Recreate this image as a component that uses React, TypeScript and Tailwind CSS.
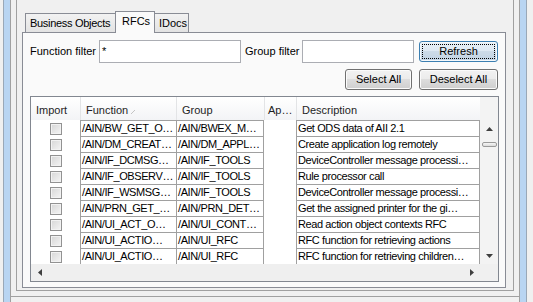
import React from "react";

const ROWS = [
  ["/AIN/BW_GET_O…", "/AIN/BWEX_M…", "Get ODS data of AII 2.1"],
  ["/AIN/DM_CREAT…", "/AIN/DM_APPL…", "Create application log remotely"],
  ["/AIN/IF_DCMSG…", "/AIN/IF_TOOLS", "DeviceController message processi…"],
  ["/AIN/IF_OBSERV…", "/AIN/IF_TOOLS", "Rule processor call"],
  ["/AIN/IF_WSMSG…", "/AIN/IF_TOOLS", "DeviceController message processi…"],
  ["/AIN/PRN_GET_…", "/AIN/PRN_DET…", "Get the assigned printer for the gi…"],
  ["/AIN/UI_ACT_O…", "/AIN/UI_CONT…", "Read action object contexts RFC"],
  ["/AIN/UI_ACTIO…", "/AIN/UI_RFC", "RFC function for retrieving actions"],
  ["/AIN/UI_ACTIO…", "/AIN/UI_RFC", "RFC function for retrieving children…"],
];

const Button = ({
  label,
  width,
  focused,
}: {
  label: string;
  width: string;
  focused?: boolean;
}) => (
  <div
    className={
      focused
        ? `${width} h-[21px] shrink-0 rounded-[3px] border border-[#3c7fb1] bg-[linear-gradient(to_bottom,#e8f0f7_0%,#dde8f2_50%,#cddbe8_50%,#c2d3e3_100%)] shadow-[inset_0_0_0_1px_#f4f8fb] p-[2px]`
        : `${width} h-[21px] shrink-0 rounded-[3px] border border-[#707070] bg-[linear-gradient(to_bottom,#f2f2f2_0%,#ebebeb_50%,#dddddd_50%,#cfcfcf_100%)] shadow-[inset_0_0_0_1px_#fbfbfb] p-[2px]`
    }
  >
    <div
      className={
        focused
          ? "h-full flex items-center justify-center border border-dotted border-black leading-none whitespace-nowrap"
          : "h-full flex items-center justify-center border border-transparent leading-none whitespace-nowrap"
      }
    >
      {label}
    </div>
  </div>
);

const Checkbox = () => (
  <div className="w-[12px] h-[12px] border border-[#929292] bg-[linear-gradient(135deg,#d6d6d6,#f4f4f4)] shadow-[inset_0_0_0_1px_#f2f2f2]" />
);

const ArrowUp = () => (
  <svg width="7" height="4" viewBox="0 0 7 4">
    <path d="M3.5 0L7 4H0z" fill="#3e3e3e" />
  </svg>
);
const ArrowDown = () => (
  <svg width="7" height="4" viewBox="0 0 7 4">
    <path d="M0 0H7L3.5 4z" fill="#3e3e3e" />
  </svg>
);
const ArrowLeft = () => (
  <svg width="4" height="7" viewBox="0 0 4 7">
    <path d="M0 3.5L4 0V7z" fill="#3e3e3e" />
  </svg>
);
const ArrowRight = () => (
  <svg width="4" height="7" viewBox="0 0 4 7">
    <path d="M4 3.5L0 0V7z" fill="#3e3e3e" />
  </svg>
);

const RfcTable = () => (
  <div className="w-[469px] h-[186px] shrink-0 border border-[#828790] bg-white flex flex-col">
    {/* header */}
    <div className="flex h-[23px]">
      <div className="w-[449px] flex bg-[linear-gradient(to_bottom,#ffffff,#f3f4f6)] text-[#1e1e1e]">
        <div className="w-[49px] pl-[5px] pt-[3px] flex items-center">Import</div>
        <div className="w-[96px] pl-[5px] pt-[3px] flex items-center border-l border-[#e3e4e6]">
          Function
          <svg width="4" height="4" viewBox="0 0 4 4" className="ml-[3px] mt-[3px]">
            <path d="M0 4L4 0" stroke="#c4c4c4" strokeWidth="1" />
          </svg>
        </div>
        <div className="w-[88px] pl-[5px] pt-[3px] flex items-center border-l border-[#e3e4e6]">Group</div>
        <div className="w-[32px] pl-[3px] pt-[3px] flex items-center border-l border-[#e3e4e6] whitespace-nowrap overflow-hidden">
          Ap…
        </div>
        <div className="w-[184px] pl-[5px] pt-[3px] flex items-center border-l border-[#e3e4e6]">Description</div>
      </div>
      <div className="w-[18px] bg-[#f3f3f3]" />
    </div>
    {/* body */}
    <div className="flex h-[144px]">
      <div className="w-[449px] flex flex-col">
        {ROWS.map((r, i) => (
          <div key={i} className="flex h-[16px] leading-[15px] tracking-[-0.4px]">
            <div className="w-[49px] flex justify-center pt-[3px]">
              <Checkbox />
            </div>
            <div className="w-[96px] border-l border-t border-[#a0a0a0] pl-[1px] whitespace-nowrap overflow-hidden">
              {r[0]}
            </div>
            <div className="w-[88px] border-l border-t border-r border-[#a0a0a0] pl-[1px] whitespace-nowrap overflow-hidden">
              {r[1]}
            </div>
            <div className="w-[32px]" />
            <div className="w-[184px] border-l border-t border-r border-[#a0a0a0] pl-[1px] whitespace-nowrap overflow-hidden">
              {r[2]}
            </div>
          </div>
        ))}
      </div>
      <div className="w-[18px] bg-[#f3f3f3] flex flex-col items-center">
        <div className="h-[17px] flex items-center justify-center">
          <ArrowUp />
        </div>
        <div className="mt-[5px] w-[15px] h-[5px] rounded-[2px] border border-[#9a9a9a] bg-[linear-gradient(to_bottom,#f6f6f6,#dcdcdc)]" />
        <div className="flex-1" />
        <div className="h-[17px] flex items-center justify-center">
          <ArrowDown />
        </div>
      </div>
    </div>
    {/* horizontal scrollbar */}
    <div className="flex h-[17px]">
      <div className="w-[449px] bg-[#efefef] flex items-center justify-between">
        <div className="w-[17px] flex items-center justify-center">
          <ArrowLeft />
        </div>
        <div className="w-[17px] flex items-center justify-center">
          <ArrowRight />
        </div>
      </div>
      <div className="w-[18px] bg-[#f0f0f0]" />
    </div>
  </div>
);

export default function App() {
  return (
    <div className="w-[533px] h-[302px] bg-[#f0f0f0] flex overflow-hidden font-['Liberation_Sans',Arial,sans-serif] text-[11px] text-black">
      <div className="w-[3px] shrink-0" />
      {/* left window border */}
      <div className="w-[8px] shrink-0 border-l border-l-[#9aa8b7] border-r border-r-[#a0a0a0] bg-[#b9d5f2]" />
      <div className="w-[508px] shrink-0 flex flex-col">
        <div className="h-[297px] border-b border-[#a0a0a0] px-[5px]">
          <div className="h-[291px] border-x border-b border-[#a0a0a0] pl-[5px] pt-[11px]">
            {/* tabs */}
            <div className="flex items-end h-[21px] pl-[3px]">
              <div className="w-[90px] h-[19px] border-t border-l border-[#898c95] bg-[linear-gradient(to_bottom,#f2f2f2,#e3e3e3)] pl-[4px] flex items-center whitespace-nowrap tracking-[-0.3px]">
                Business Objects
              </div>
              <div className="relative z-10 w-[40px] h-[22px] -mb-px border-x border-t border-[#898c95] bg-[#fafafa] pl-[6px] pb-[2px] flex items-center">
                RFCs
              </div>
              <div className="w-[34px] h-[19px] border-t border-r border-[#898c95] bg-[linear-gradient(to_bottom,#f2f2f2,#e3e3e3)] pl-[4px] flex items-center">
                IDocs
              </div>
            </div>
            {/* tab panel */}
            <div className="w-[484px] h-[256px] border border-[#898c95] bg-[#fafafa] pt-[7px] pl-[7px] pr-[7px] flex flex-col">
              <div className="flex items-center h-[23px]">
                <div className="w-[69px] shrink-0 whitespace-nowrap">Function filter</div>
                <div className="w-[142px] h-[23px] shrink-0 border border-[#abadb3] bg-white pl-[2px] flex items-center">
                  *
                </div>
                <div className="w-[57px] shrink-0 ml-[4px] whitespace-nowrap">Group filter</div>
                <div className="w-[112px] h-[23px] shrink-0 border border-[#abadb3] bg-white" />
                <div className="ml-[5px]">
                  <Button label="Refresh" width="w-[79px]" focused />
                </div>
              </div>
              <div className="flex justify-end gap-[7px] mt-[6px]">
                <Button label="Select All" width="w-[67px]" />
                <Button label="Deselect All" width="w-[79px]" />
              </div>
              <div className="mt-[6px]">
                <RfcTable />
              </div>
            </div>
          </div>
        </div>
      </div>
      {/* right window border */}
      <div className="w-[8px] shrink-0 border-l border-l-[#a0a0a0] border-r border-r-[#9aa8b7] bg-[#b9d5f2]" />
    </div>
  );
}
